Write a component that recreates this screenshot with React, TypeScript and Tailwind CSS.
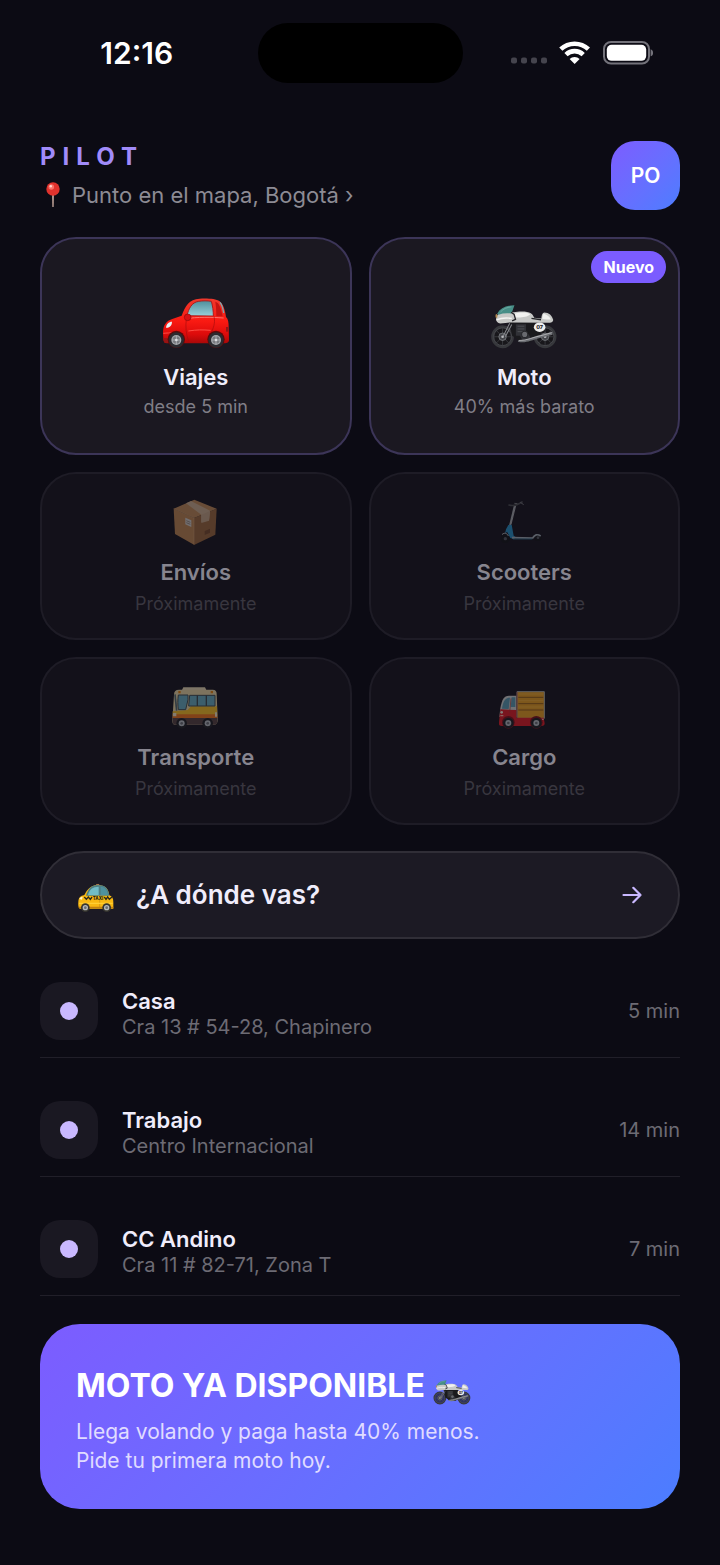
import React from "react";

type IconProps = { className?: string };

function CarIcon({ className }: IconProps) {
  return (
    <svg viewBox="33 45 204 153" className={className} aria-hidden="true">
      <defs>
        <linearGradient id="carBody" x1="0" y1="0" x2="0" y2="1">
          <stop offset="0" stopColor="#f0382c" />
          <stop offset="0.5" stopColor="#fa1a12" />
          <stop offset="0.8" stopColor="#dc0b0b" />
          <stop offset="1" stopColor="#a80808" />
        </linearGradient>
        <linearGradient id="carGlass" x1="0" y1="0" x2="0" y2="1">
          <stop offset="0" stopColor="#4f8f9c" />
          <stop offset="1" stopColor="#98d0d9" />
        </linearGradient>
      </defs>
      <path d="M36 150c0-22 8-37 30-43l26-9c11-30 22-49 54-51 25-1 48 0 60 8 11 9 16 26 19 47 7 6 8 18 8 30l1 40c0 6-6 9-12 9H48c-8 0-11-5-11-12z" fill="url(#carBody)" />
      <path d="M108 98c5-21 14-40 35-43 12-2 26-2 38 0 4 14 6 29 6 44z" fill="url(#carGlass)" stroke="#a80e0e" strokeWidth="2.5" />
      <path d="M193 56c13 3 18 25 22 44h-19c0-16-1-30-3-44z" fill="#c51310" />
      <path d="M207 58c6 7 9 19 11 32" fill="none" stroke="#79a9b2" strokeWidth="4" />
      <path d="M106 107c30-5 75-5 112-2" stroke="#ff7068" strokeWidth="3" fill="none" />
      <path d="M106 108c-3 23-1 46 7 67M189 100c3 14 2 28-8 48" stroke="#a80c0c" strokeWidth="2" fill="none" />
      <path d="M112 144c25-4 43-4 67-2" stroke="#ff4d45" strokeWidth="3" fill="none" />
      <ellipse cx="110" cy="103" rx="10" ry="10" fill="#d90f14" stroke="#8e0a0a" strokeWidth="2" />
      <path d="M45 134c1-11 8-18 18-18 0 11-7 19-18 18z" fill="#e9f0f3" />
      <path d="M37 151c20-2 45-2 55 1" stroke="#ff4d45" strokeWidth="3" fill="none" />
      <path d="M36 165h16v14H40z" fill="#961414" />
      <path d="M225 132h7v14h-7z" fill="#921515" />
      {[76, 195].map((x) => (
        <g key={x}>
          <circle cx={x} cy="169" r="26" fill="#5a0b0b" />
          <circle cx={x} cy="171" r="23" fill="#2b2b30" />
          <circle cx={x} cy="171" r="15" fill="#a4a7ab" />
          <circle cx={x} cy="171" r="11" fill="#77797e" />
          <path d={`M${x - 12} 171h24M${x} 159v24`} stroke="#c3c5c8" strokeWidth="2" />
          <circle cx={x} cy="171" r="4" fill="#dcdee0" />
        </g>
      ))}
    </svg>
  );
}

function MotoIcon({ className }: IconProps) {
  return (
    <svg viewBox="33 165 198 150" className={className} aria-hidden="true">
      {[69, 194].map((x) => (
        <g key={x}>
          <circle cx={x} cy="279" r="30" fill="#17171a" fillOpacity="0.7" stroke="#37383c" strokeWidth="7" />
          <circle cx={x} cy="279" r="26" fill="none" stroke="#696b70" strokeWidth="1.5" />
          <path
            d={`M${x - 25} 279h50M${x} 254v50M${x - 18} 261l36 36M${x + 18} 261l-36 36`}
            stroke="#55575c"
            strokeWidth="1.5"
          />
          <circle cx={x} cy="279" r="11" fill="#45464b" stroke="#85878c" strokeWidth="2" />
          <circle cx={x} cy="279" r="4" fill="#b6b7ba" />
        </g>
      ))}
      <path d="M88 236h75l20 35-34 24h-28l-24-20z" fill="#1a1a1d" />
      <path d="M108 242h30v34h-30zM120 276l24-6 12 17-28 4z" fill="#303136" />
      <path d="M113 248h20M113 256h20M113 264h20" stroke="#5b5d62" strokeWidth="2" />
      <circle cx="134" cy="272" r="9" fill="#686a6f" stroke="#26272b" strokeWidth="3" />
      <path d="M90 239l-19 38M96 243l-19 36" stroke="#86888d" strokeWidth="3" />
      <path d="M115 289c30 1 38-10 67-16l34-9v9l-38 10c-26 7-40 16-64 11z" fill="#6b6d72" />
      <path d="M117 290c25 0 42-10 68-15l28-8" stroke="#cbccce" strokeWidth="2" fill="none" />
      <path d="M50 225c2-11 9-17 20-18h32c14-3 41-4 50 3 6 4 8 10 10 13l21 2c1-10 3-16 9-17 13 0 23 9 26 22-1 6-5 8-10 8l-118-1c-9 0-16 3-28 3-8 0-13-7-12-15z" fill="#c8c9c7" />
      <path d="M102 211c17-4 40-6 48 2-9 10-31 10-46 9z" fill="#f2f2f0" />
      <path d="M189 211c8 2 19 8 22 17-10 1-21-1-26-3z" fill="#f0f0ee" />
      <path d="M51 229c12-5 25-7 45-4" stroke="#f4f4f2" strokeWidth="4" fill="none" />
      <path d="M53 211c9-16 26-24 51-25l-9 25c-13-2-25-1-38 3z" fill="#478e87" />
      <path d="M63 206c9-10 18-13 32-15" stroke="#7db5ae" strokeWidth="2" fill="none" />
      <path d="M94 207l9 6 4 15-10 4M154 225l28 4" stroke="#242428" strokeWidth="4" fill="none" />
      <ellipse cx="178" cy="251" rx="17" ry="14" fill="#eeeeed" />
      <text x="178" y="257" textAnchor="middle" fontFamily="Inter, sans-serif" fontWeight="800" fontSize="16" fill="#202024">07</text>
      <ellipse cx="51" cy="218" rx="3" ry="6" fill="#b48b53" />
    </svg>
  );
}

function BoxIcon({ className }: IconProps) {
  return (
    <svg viewBox="30 24 150 150" className={className} aria-hidden="true">
      <path d="M38 59l61 28v80l-57-32z" fill="#bb844f" />
      <path d="M99 87l68-28-4 78-64 31z" fill="#99663b" />
      <path d="M38 59l62-27 67 27-68 28z" fill="#bd8855" />
      <path d="M75 43l15-7 57 29-3 29-23 5v-22z" fill="#c9ab8c" />
      <path d="M121 77l26-11-3 29-23 7z" fill="#c0a082" />
      <path d="M73 86l18 8v20l-18-8z" fill="#cfcac5" />
      <path d="M76 95l12 5M76 101l12 5" stroke="#77695c" strokeWidth="2" />
      <path d="M131 126l16-7v12l-16 7z" fill="#77492b" />
      <path d="M38 59l61 28v80" fill="none" stroke="#d0a071" strokeWidth="1.5" />
    </svg>
  );
}

function ScooterIcon({ className }: IconProps) {
  return (
    <svg viewBox="30 24 150 150" className={className} aria-hidden="true">
      <circle cx="49" cy="149" r="13" fill="#111216" />
      <circle cx="49" cy="149" r="5" fill="#50555c" />
      <circle cx="147" cy="146" r="10" fill="#111216" />
      <circle cx="147" cy="146" r="4" fill="#50555c" />
      <path d="M77 50L62 112" stroke="#a1a6aa" strokeWidth="5" />
      <path d="M80 51L66 107" stroke="#d5d7d8" strokeWidth="2" />
      <path d="M60 48c12 4 27-1 39-9" stroke="#494b4f" strokeWidth="5" fill="none" strokeLinecap="round" />
      <path d="M76 43l9 1M94 40l10 7" stroke="#75777b" strokeWidth="3" />
      <path d="M58 108l10-1 6 33 7 5-7 5-10-3-10-19-6 6 3-13z" fill="#248fc4" />
      <path d="M69 146l62 1c6-10 14-13 24-6" fill="none" stroke="#a1adb5" strokeWidth="5" />
      <path d="M72 150h58" stroke="#3688ab" strokeWidth="2" />
      <path d="M39 137c7-8 16-4 19 4" stroke="#b5babd" strokeWidth="3" fill="none" />
    </svg>
  );
}

function BusIcon({ className }: IconProps) {
  return (
    <svg viewBox="30 24 150 150" className={className} aria-hidden="true">
      <path d="M67 40h65l4 8h-73z" fill="#e7d9b3" />
      <path d="M39 62c0-10 5-15 15-15h101c9 0 12 5 12 12l3 78c0 10-4 15-12 15H43c-7 0-9-5-9-12z" fill="#e6d4a2" />
      <path d="M35 112l45-4 10-11h78l1 28H35z" fill="#f6be22" />
      <path d="M35 121h134v12H35z" fill="#ee7419" />
      <path d="M35 132h134v11c0 6-4 9-10 9H43c-5 0-8-4-8-9z" fill="#53403f" />
      <path d="M52 63h29v14l-7 30H52c-2-14-2-29 0-44z" fill="#66aabd" stroke="#3c4a4f" strokeWidth="3" />
      <path d="M86 64h76v32H83z" fill="#66aabd" stroke="#3c4a4f" strokeWidth="3" />
      <path d="M109 64v32M136 64v32" stroke="#3c4a4f" strokeWidth="4" />
      <path d="M42 61l5 49" stroke="#51676c" strokeWidth="5" />
      <path d="M52 51h7v7h-7zM149 51h7v7h-7z" fill="#e7830c" />
      <path d="M36 117h10v10H36zM162 115h6v13h-6z" fill="#f4e7c5" />
      {[62, 140].map((x) => (
        <g key={x}>
          <circle cx={x} cy="148" r="16" fill="#1c1d21" />
          <circle cx={x} cy="148" r="9" fill="#b5bbc0" />
          <circle cx={x} cy="148" r="4" fill="#676b70" />
        </g>
      ))}
    </svg>
  );
}

function TruckIcon({ className }: IconProps) {
  return (
    <svg viewBox="30 24 150 150" className={className} aria-hidden="true">
      <path d="M84 53h82v80H84z" fill="#e79c1e" stroke="#aab0ae" strokeWidth="3" />
      <path d="M88 70h75M88 89h75M88 108h75" stroke="#915d16" strokeWidth="3" />
      <path d="M88 60h75M88 80h75M88 99h75" stroke="#f0ad32" strokeWidth="3" />
      <path d="M34 103c5-27 10-37 26-38h22v64H31z" fill="#ccd0cd" />
      <path d="M39 104c3-18 7-31 20-33h4l-4 34zM68 70h11v29H65z" fill="#5798af" />
      <path d="M34 106l48 2v23h82l3 17c0 6-3 8-9 8H38c-8 0-9-5-8-12z" fill="#df1922" />
      <path d="M34 125h9M153 136h11" stroke="#ffb6a4" strokeWidth="4" />
      <path d="M66 73l-4 43M84 53v81" stroke="#a7332f" strokeWidth="2" />
      <circle cx="38" cy="115" r="4" fill="#eee4d3" />
      {[58, 142].map((x) => (
        <g key={x}>
          <circle cx={x} cy="145" r="19" fill="#7a1019" />
          <circle cx={x} cy="147" r="16" fill="#1c1d21" />
          <circle cx={x} cy="147" r="9" fill="#b5bbc0" />
          <circle cx={x} cy="147" r="4" fill="#676b70" />
        </g>
      ))}
    </svg>
  );
}

function TaxiIcon({ className }: IconProps) {
  return (
    <svg viewBox="24 35 108 87" className={className} aria-hidden="true">
      <path d="M77 45l2-6h8l3 6z" fill="#d99a58" />
      <path d="M25 91c1-13 6-17 18-20 8-15 18-29 39-30 24 0 33 10 36 31 9 3 12 10 12 21v19H29c-4-3-5-12-4-21z" fill="#f8b812" />
      <path d="M48 73c6-20 16-32 35-32 22 0 32 9 35 32z" fill="#4d7f86" />
      <path d="M54 71c4-17 14-25 32-25v25z" fill="#72bcc7" />
      <path d="M92 46c14 2 20 9 22 25H92z" fill="#4e929f" />
      <path d="M89 74v36" stroke="#c78f12" strokeWidth="2" />
      <path d="M43 77l6 7 6-7 6 7 5-7M103 77l5 7 5-7 5 7 8-7" fill="none" stroke="#292719" strokeWidth="4" />
      <text x="84" y="86" textAnchor="middle" fontFamily="Inter, sans-serif" fontSize="13" fontWeight="800" fill="#252318">TAXI</text>
      <path d="M27 96h101" stroke="#ffcf34" strokeWidth="4" />
      <path d="M28 83c2-5 6-7 10-7l-2 9z" fill="#fff4d0" />
      <path d="M26 106h104v5H27z" fill="#c28110" />
      {[46, 110].map((x) => (
        <g key={x}>
          <circle cx={x} cy="109" r="13" fill="#36352f" />
          <circle cx={x} cy="109" r="8" fill="#b6babd" />
          <circle cx={x} cy="109" r="4" fill="#696d70" />
        </g>
      ))}
    </svg>
  );
}

function PinIcon({ className }: IconProps) {
  return (
    <svg viewBox="0 0 14 26" className={className} aria-hidden="true">
      <path d="M6 12h2l-.3 13h-1.4z" fill="#b79b91" />
      <circle cx="7" cy="7" r="6.7" fill="#e0322d" />
      <circle cx="5.3" cy="5" r="2.8" fill="#ff8277" fillOpacity="0.8" />
      <circle cx="4.8" cy="4.2" r="1.2" fill="#ffd5cf" />
    </svg>
  );
}

function StatusBar() {
  return (
    <div className="grid h-[106px] grid-cols-[1fr_205px_1fr] items-center">
      <span className="pl-4 text-center text-3xl leading-8 font-semibold text-white">12:16</span>
      <div className="h-[60px] rounded-full bg-black" />
      <div className="flex items-center justify-center pr-[18px]">
        <svg viewBox="0 0 142 24" className="h-6 w-[142px]" role="img" aria-label="Señal, wifi y batería">
          {[3, 13, 23, 33].map((x) => (
            <rect key={x} x={x - 3} y="16.5" width="6" height="6" rx="2" fill="#45444d" />
          ))}
          <g fill="none" stroke="#fff" strokeWidth="4.6">
            <path d="M49.8 8.2a20 20 0 0 1 27.6 0" />
            <path d="M55 13.6a12.4 12.4 0 0 1 17.2 0" />
          </g>
          <path d="M63.6 23.1l-5-5.1a7.2 7.2 0 0 1 10 0z" fill="#fff" />
          <rect x="93" y="1" width="45" height="21.5" rx="7" fill="none" stroke="#73727a" strokeWidth="2" />
          <rect x="95.8" y="3.8" width="39.4" height="16" rx="4.8" fill="#fff" />
          <path d="M139.6 8.3c3.4 1 3.4 6 0 7z" fill="#73727a" />
        </svg>
      </div>
    </div>
  );
}

type Service = {
  name: string;
  note: string;
  Icon: (props: IconProps) => React.JSX.Element;
  badge?: string;
};

const services: Service[] = [
  { name: "Viajes", note: "desde 5 min", Icon: CarIcon },
  { name: "Moto", note: "40% más barato", Icon: MotoIcon, badge: "Nuevo" },
];

const upcoming: Service[] = [
  { name: "Envíos", note: "Próximamente", Icon: BoxIcon },
  { name: "Scooters", note: "Próximamente", Icon: ScooterIcon },
  { name: "Transporte", note: "Próximamente", Icon: BusIcon },
  { name: "Cargo", note: "Próximamente", Icon: TruckIcon },
];

const places = [
  { name: "Casa", address: "Cra 13 # 54-28, Chapinero", time: "5 min" },
  { name: "Trabajo", address: "Centro Internacional", time: "14 min" },
  { name: "CC Andino", address: "Cra 11 # 82-71, Zona T", time: "7 min" },
];

function ServiceCard({ name, note, Icon, badge }: Service) {
  return (
    <button type="button" className="relative flex h-[218px] flex-col items-center justify-center rounded-[36px] border-2 border-[#3c3558] bg-[#1b1821]">
      {badge && (
        <span className="absolute top-3 right-3 rounded-full bg-[#7b5cff] px-3 text-base leading-8 font-bold text-white">{badge}</span>
      )}
      <Icon className="mt-6 h-[51px] w-[68px]" />
      <span className="mt-[14px] text-[22px] leading-7 font-semibold text-[#f0edfb]">{name}</span>
      <span className="mt-1 text-lg leading-6 text-[#807e87]">{note}</span>
    </button>
  );
}

function UpcomingCard({ name, note, Icon }: Service) {
  return (
    <button type="button" disabled className="flex h-[168px] flex-col items-center justify-center rounded-[36px] border-2 border-[#1e1c26] bg-[#13111a] pt-px">
      <Icon className="size-[50px] opacity-50" />
      <span className="mt-[11px] text-[22px] leading-7 font-semibold text-[#87858f]">{name}</span>
      <span className="mt-[6px] text-lg leading-6 text-[#38363f]">{note}</span>
    </button>
  );
}

export default function App() {
  return (
    <div className="min-h-screen bg-[#0c0b14] font-['Inter',sans-serif]">
      <StatusBar />
      <main className="px-10 pt-[35px] pb-14">
        <header className="flex items-center justify-between">
          <div className="flex flex-col gap-[7px]">
            <h1 className="text-2xl leading-8 font-bold tracking-[7px] text-[#a18bfa]">PILOT</h1>
            <button type="button" className="flex items-center gap-3 pl-[6px] text-[22px] leading-[30px] text-[#8d8b94]">
              <PinIcon className="h-[26px] w-[14px]" />
              Punto en el mapa, Bogotá ›
            </button>
          </div>
          <button type="button" aria-label="Perfil PO" className="h-[69px] w-[69px] rounded-3xl bg-linear-135 from-[#7c5cff] to-[#4b7dff] text-[21px] font-semibold text-white">
            PO
          </button>
        </header>

        <section aria-label="Servicios" className="mt-[27px] grid grid-cols-2 gap-[17px]">
          {services.map((s) => (
            <ServiceCard key={s.name} {...s} />
          ))}
          {upcoming.map((s) => (
            <UpcomingCard key={s.name} {...s} />
          ))}
        </section>

        <button type="button" className="mt-[26px] flex h-[88px] w-full items-center rounded-full border-2 border-[#302e37] bg-[#1c1a24] px-9 text-left">
          <TaxiIcon className="mt-1 h-[29px] w-9" />
          <span className="ml-[22px] flex-1 text-[26px] leading-8 font-semibold text-[#f0edfb]">¿A dónde vas?</span>
          <svg viewBox="0 0 20 18" className="h-[18px] w-5" fill="none" stroke="#c9b8ff" strokeWidth="2.2" strokeLinecap="round" strokeLinejoin="round" aria-hidden="true">
            <path d="M1.5 9h17M11.3 1.8L18.5 9l-7.2 7.2" />
          </svg>
        </button>

        <ul>
          {places.map((p) => (
            <li key={p.name} className="border-b border-[#211f29]">
              <button type="button" className="flex w-full items-center pt-[43px] pb-[17px] text-left">
                <span className="flex size-[58px] items-center justify-center rounded-[20px] bg-[#1a1822]">
                  <span className="size-[18px] rounded-full bg-[#c9b8ff]" />
                </span>
                <span className="ml-6 flex flex-1 flex-col pt-[6px]">
                  <span className="text-[22px] leading-[26px] font-semibold text-[#f0edfb]">{p.name}</span>
                  <span className="text-xl leading-[26px] text-[#6d6b74]">{p.address}</span>
                </span>
                <span className="text-xl leading-[26px] text-[#6d6b74]">{p.time}</span>
              </button>
            </li>
          ))}
        </ul>

        <section className="mt-7 rounded-[40px] bg-linear-135 from-[#7c5cff] to-[#4b7dff] px-9 pt-10 pb-[34px]">
          <h2 className="flex items-center gap-2 text-[32px] leading-[44px] font-bold text-white">
            MOTO YA DISPONIBLE
            <MotoIcon className="mt-2 h-[29px] w-[38px]" />
          </h2>
          <p className="mt-[9px] text-[21px] leading-[29px] text-[#e0dcff]">
            Llega volando y paga hasta 40% menos.
            <br />
            Pide tu primera moto hoy.
          </p>
        </section>
      </main>
    </div>
  );
}
